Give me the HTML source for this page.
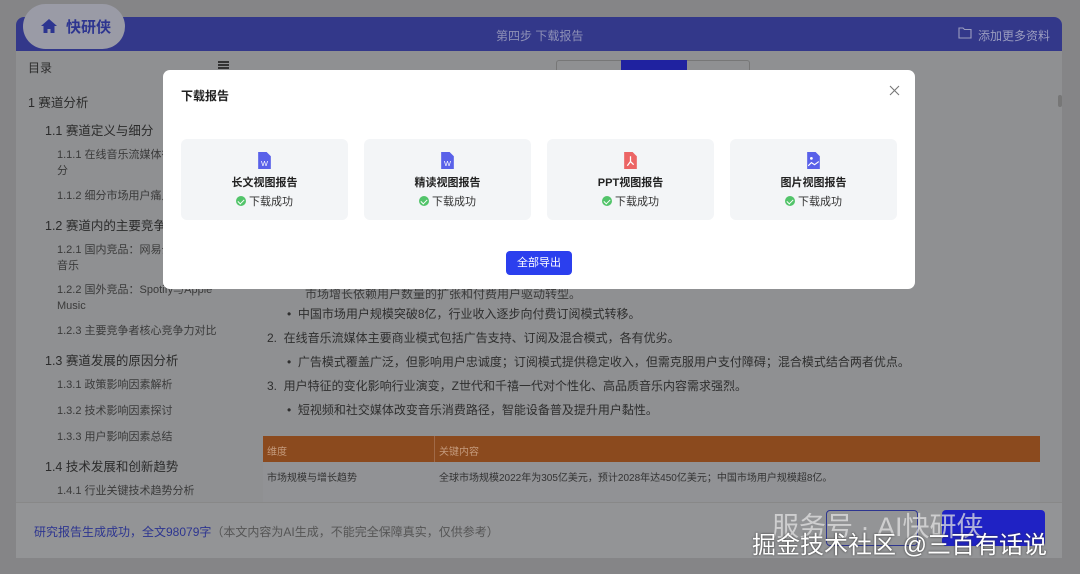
<!DOCTYPE html>
<html><head><meta charset="utf-8"><style>
*{margin:0;padding:0;box-sizing:border-box}
body{width:1080px;height:574px;background:#858587;font-family:"Liberation Sans","Noto Sans CJK SC",sans-serif;position:relative;overflow:hidden}
.abs{position:absolute}
.card{left:16px;top:17px;width:1046px;height:541px;background:#8f9092;border-radius:8px;overflow:hidden}
.hdr{left:16px;top:17px;width:1046px;height:34px;background:#33388a;border-radius:8px 8px 0 0}
.side{color:#2b2b2b;white-space:nowrap}
.sub{font-size:11px;color:#3a3a3a;line-height:16px}
.t{font-size:12px;color:#2e2e2e;white-space:nowrap}
.modal{left:163px;top:70px;width:752px;height:219px;background:#fff;border-radius:7px}
.dc{position:absolute;top:69px;width:167px;height:81px;background:#f3f5f7;border-radius:6px;text-align:center}
.dc .n{position:absolute;top:35px;width:100%;font-size:11px;font-weight:bold;color:#222}
.dc .s{position:absolute;top:54px;width:100%;font-size:11px;color:#333}
.ok{display:inline-block;width:10px;height:10px;border-radius:50%;background:#52c46a;vertical-align:-1px;margin-right:3px;position:relative}
.ok:after{content:"";position:absolute;left:3px;top:2px;width:3px;height:5px;border:solid #fff;border-width:0 1.3px 1.3px 0;transform:rotate(45deg)}
.ic{position:absolute;top:12px;left:76px}
</style></head><body>
<div class="abs card"></div>
<div class="abs hdr"></div>
<div class="abs" style="left:23px;top:4px;width:102px;height:45px;border-radius:23px;background:#9a9ba6"></div>
<svg class="abs" style="left:40px;top:18px" width="18" height="16" viewBox="0 0 18 16"><path d="M9 1L1 8h2.5v7h4v-4h3v4h4V8H17z" fill="#2d3590"/></svg>
<div class="abs" style="left:66px;top:16px;font-size:15px;font-weight:bold;color:#2d3590">快研侠</div>
<div class="abs" style="left:496px;top:27px;font-size:12px;color:#8e90b6">第四步 下载报告</div>
<svg class="abs" style="left:958px;top:27px" width="14" height="12" viewBox="0 0 14 12"><path d="M1 1h4l1.5 1.5H13V11H1z" fill="none" stroke="#9a9cbf" stroke-width="1.1"/></svg>
<div class="abs" style="left:978px;top:27px;font-size:12px;color:#9a9cbf">添加更多资料</div>
<!-- sidebar -->
<div class="abs side" style="left:28px;top:59px;font-size:12px">目录</div>
<div class="abs" style="left:218px;top:61px;width:11px;height:1.5px;background:#333;box-shadow:0 3px #333,0 6px #333"></div>
<div class="abs side" style="left:28px;top:92px;font-size:12.5px">1 赛道分析</div>
<div class="abs side" style="left:45px;top:120px;font-size:12.5px">1.1 赛道定义与细分</div>
<div class="abs side sub" style="left:57px;top:147px">1.1.1 在线音乐流媒体行<br>分</div>
<div class="abs side sub" style="left:57px;top:188px">1.1.2 细分市场用户痛点</div>
<div class="abs side" style="left:45px;top:215px;font-size:12.5px">1.2 赛道内的主要竞争者</div>
<div class="abs side sub" style="left:57px;top:242px">1.2.1 国内竞品：网易云<br>音乐</div>
<div class="abs side sub" style="left:57px;top:282px">1.2.2 国外竞品：Spotify与Apple<br>Music</div>
<div class="abs side sub" style="left:57px;top:323px">1.2.3 主要竞争者核心竞争力对比</div>
<div class="abs side" style="left:45px;top:350px;font-size:12.5px">1.3 赛道发展的原因分析</div>
<div class="abs side sub" style="left:57px;top:377px">1.3.1 政策影响因素解析</div>
<div class="abs side sub" style="left:57px;top:403px">1.3.2 技术影响因素探讨</div>
<div class="abs side sub" style="left:57px;top:429px">1.3.3 用户影响因素总结</div>
<div class="abs side" style="left:45px;top:456px;font-size:12.5px">1.4 技术发展和创新趋势</div>
<div class="abs side sub" style="left:57px;top:483px">1.4.1 行业关键技术趋势分析</div>
<!-- tabs -->
<div class="abs" style="left:556px;top:60px;width:194px;height:14px;border:1px solid #777;border-radius:3px"></div>
<div class="abs" style="left:621px;top:60px;width:66px;height:14px;background:#1f22a0"></div>
<div class="abs" style="left:1058px;top:95px;width:4px;height:12px;background:#777;border-radius:2px"></div>
<!-- content -->
<div class="abs t" style="left:305px;top:285px;color:#3a3a3a">市场增长依赖用户数量的扩张和付费用户驱动转型。</div>
<div class="abs t" style="left:287px;top:305px">•&nbsp;&nbsp;中国市场用户规模突破8亿，行业收入逐步向付费订阅模式转移。</div>
<div class="abs t" style="left:267px;top:329px">2.&nbsp;&nbsp;在线音乐流媒体主要商业模式包括广告支持、订阅及混合模式，各有优劣。</div>
<div class="abs t" style="left:287px;top:353px">•&nbsp;&nbsp;广告模式覆盖广泛，但影响用户忠诚度；订阅模式提供稳定收入，但需克服用户支付障碍；混合模式结合两者优点。</div>
<div class="abs t" style="left:267px;top:377px">3.&nbsp;&nbsp;用户特征的变化影响行业演变，Z世代和千禧一代对个性化、高品质音乐内容需求强烈。</div>
<div class="abs t" style="left:287px;top:401px">•&nbsp;&nbsp;短视频和社交媒体改变音乐消费路径，智能设备普及提升用户黏性。</div>
<div class="abs" style="left:263px;top:436px;width:777px;height:26px;background:#8b4a1e"></div>
<div class="abs" style="left:434px;top:436px;width:1px;height:26px;background:#a06a48"></div>
<div class="abs" style="left:267px;top:443px;font-size:10px;color:#c49a7c">维度</div>
<div class="abs" style="left:439px;top:443px;font-size:10px;color:#c49a7c">关键内容</div>
<div class="abs" style="left:263px;top:462px;width:777px;height:40px;background:#919295"></div>
<div class="abs" style="left:267px;top:469px;font-size:10px;color:#333">市场规模与增长趋势</div>
<div class="abs" style="left:439px;top:469px;font-size:10px;color:#333">全球市场规模2022年为305亿美元，预计2028年达450亿美元；中国市场用户规模超8亿。</div>
<!-- footer -->
<div class="abs" style="left:16px;top:502px;width:1046px;height:56px;background:#939496;border-top:1px solid #888"></div>
<div class="abs" style="left:34px;top:523px;font-size:12px;color:#2d3590">研究报告生成成功，全文98079字<span style="color:#555">（本文内容为AI生成，不能完全保障真实，仅供参考）</span></div>
<div class="abs" style="left:826px;top:510px;width:92px;height:36px;border:1px solid #2d3590;border-radius:4px"></div>
<div class="abs" style="left:942px;top:510px;width:103px;height:36px;background:#1f22c4;border-radius:4px"></div>
<div class="abs" style="left:757px;top:505px;font-size:27px;color:rgba(225,225,225,.75);white-space:nowrap">&nbsp;&nbsp;服务号 · AI快研侠</div>
<div class="abs" style="left:752px;top:525px;font-size:24px;color:#fff;white-space:nowrap;text-shadow:0 0 2px #333">掘金技术社区 @三百有话说</div>
<!-- modal -->
<div class="abs modal">
<div class="abs" style="left:18px;top:17px;font-size:12px;font-weight:bold;color:#222">下载报告</div>
<svg class="abs" style="left:726px;top:15px" width="11" height="11" viewBox="0 0 11 11"><path d="M1 1L10 10M10 1L1 10" stroke="#777" stroke-width="1.1"/></svg>
<div class="dc" style="left:18px"><svg class="ic" width="15" height="19" viewBox="0 0 14 18"><path d="M1 1h8l4 4v12H1z" fill="#5961e9"/><text x="7" y="14" font-size="7" fill="#fff" text-anchor="middle" font-family="Liberation Sans">W</text></svg><div class="n">长文视图报告</div><div class="s"><span class="ok"></span>下载成功</div></div>
<div class="dc" style="left:201px"><svg class="ic" width="15" height="19" viewBox="0 0 14 18"><path d="M1 1h8l4 4v12H1z" fill="#5961e9"/><text x="7" y="14" font-size="7" fill="#fff" text-anchor="middle" font-family="Liberation Sans">W</text></svg><div class="n">精读视图报告</div><div class="s"><span class="ok"></span>下载成功</div></div>
<div class="dc" style="left:384px"><svg class="ic" width="15" height="19" viewBox="0 0 14 18"><path d="M1 1h8l4 4v12H1z" fill="#ec6565"/><path d="M7 5v5M7 10l-3 4M7 10l3 3" stroke="#fff" stroke-width="1.2" fill="none"/></svg><div class="n">PPT视图报告</div><div class="s"><span class="ok"></span>下载成功</div></div>
<div class="dc" style="left:567px"><svg class="ic" width="15" height="19" viewBox="0 0 14 18"><path d="M1 1h8l4 4v12H1z" fill="#5961e9"/><circle cx="5" cy="7" r="1.3" fill="#fff"/><path d="M2 14l3-3 3 2 4-3" stroke="#fff" stroke-width="1.1" fill="none"/></svg><div class="n">图片视图报告</div><div class="s"><span class="ok"></span>下载成功</div></div>
<div class="abs" style="left:343px;top:181px;width:66px;height:24px;background:#2b3fee;border-radius:4px;color:#fff;font-size:11px;text-align:center;line-height:24px">全部导出</div>
</div>
</body></html>
